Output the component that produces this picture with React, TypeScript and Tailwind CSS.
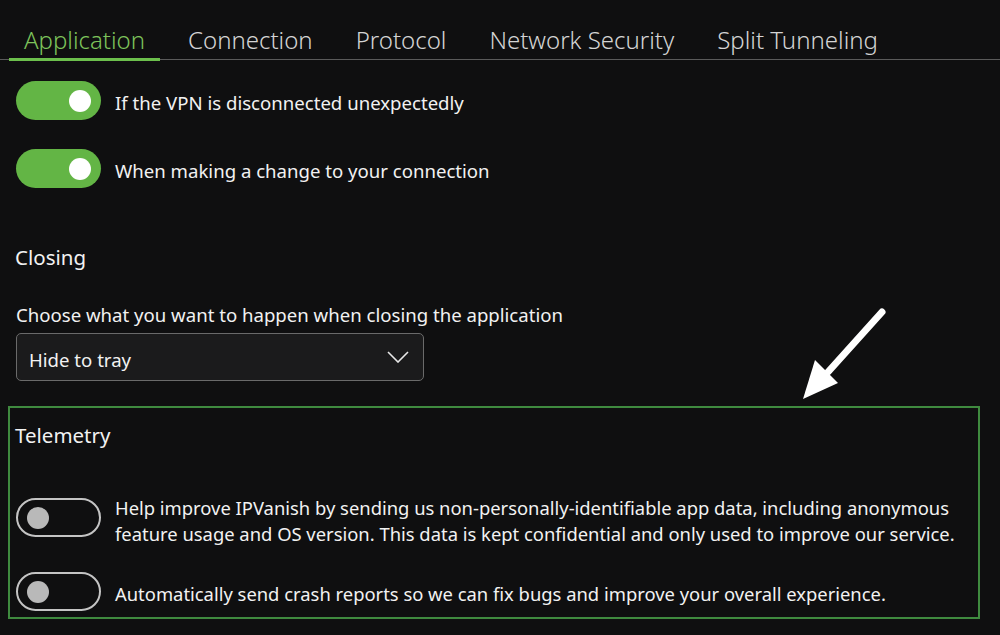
import React from "react";

function Toggle({ on }: { on: boolean }) {
  return on ? (
    <div className="w-[85px] h-[39px] rounded-full bg-[#63b545] flex items-center justify-end pr-[10px] shrink-0">
      <div className="w-[22px] h-[22px] rounded-full bg-white" />
    </div>
  ) : (
    <div className="w-[85px] h-[39px] rounded-full border-2 border-[#c4c4c4] flex items-center pl-[9px] shrink-0">
      <div className="w-[22px] h-[22px] rounded-full bg-[#b9b9b9]" />
    </div>
  );
}

export default function App() {
  const font = { fontFamily: '"Noto Sans", "Open Sans", sans-serif' };
  return (
    <div
      className="w-[1000px] h-[635px] bg-[#0f0f10] text-[#f2f2f2] overflow-hidden relative"
      style={font}
    >
      {/* Tabs */}
      <div className="flex items-end h-[60px] border-b border-[#5a5a5a] pl-[9px]">
        <div className="px-[15px] pb-[2px] border-b-[3px] border-[#6cbf4c] -mb-[2px] text-[24px] font-light text-[#7dc35b] leading-[32px]">
          Application
        </div>
        <div className="ml-[13px] px-[15px] pb-[3px] text-[24px] font-light text-[#d4d4d4] leading-[32px]">
          Connection
        </div>
        <div className="ml-[13px] px-[15px] pb-[3px] text-[24px] font-light text-[#d4d4d4] leading-[32px]">
          Protocol
        </div>
        <div className="ml-[13px] px-[15px] pb-[3px] text-[24px] font-light text-[#d4d4d4] leading-[32px]">
          Network Security
        </div>
        <div className="ml-[13px] px-[15px] pb-[3px] text-[24px] font-light text-[#d4d4d4] leading-[32px]">
          Split Tunneling
        </div>
      </div>

      <div className="pl-[16px]">
        <div className="flex items-center gap-[14px] mt-[21px]">
          <Toggle on />
          <span className="text-[18.6px] pt-[4px]">If the VPN is disconnected unexpectedly</span>
        </div>
        <div className="flex items-center gap-[14px] mt-[29px]">
          <Toggle on />
          <span className="text-[18.6px] pt-[4px]">When making a change to your connection</span>
        </div>

        <div className="mt-[54px] -ml-[1px] text-[20.5px] leading-[30px]">Closing</div>
        <div className="mt-[30px] text-[18.6px] leading-[26px]">
          Choose what you want to happen when closing the application
        </div>
        <div className="mt-[5px] w-[408px] h-[48px] rounded-[5px] border border-[#6a6a6a] bg-[#1b1b1c] flex items-center justify-between pl-[12px] pr-[14px]">
          <span className="text-[18.6px] pt-[6px]">Hide to tray</span>
          <svg width="22" height="12" viewBox="0 0 22 12" fill="none">
            <path d="M1 1 L11 11 L21 1" stroke="#e8e8e8" strokeWidth="1.6" />
          </svg>
        </div>
      </div>

      {/* Arrow annotation */}
      <svg
        className="absolute left-[795px] top-[305px]"
        width="95"
        height="100"
        viewBox="0 0 95 100"
        fill="none"
      >
        <path d="M87 7 L33 67" stroke="white" strokeWidth="7" strokeLinecap="round" />
        <path d="M8 94 L20 55 L43 78 Z" fill="white" />
      </svg>

      {/* Telemetry */}
      <div className="ml-[8px] mt-[25px] w-[972px] h-[213px] border-2 border-[#3f8a3f] pl-[6px] pt-[12px]">
        <div className="text-[20.5px] leading-[30px] -ml-[1px]">Telemetry</div>
        <div className="flex items-start gap-[14px] mt-[48px] h-[39px]">
          <Toggle on={false} />
          <div className="text-[18.4px] leading-[26px] -mt-[3px]">
            Help improve IPVanish by sending us non-personally-identifiable app data, including anonymous
            <br />
            feature usage and OS version. This data is kept confidential and only used to improve our service.
          </div>
        </div>
        <div className="flex items-center gap-[14px] mt-[35px]">
          <Toggle on={false} />
          <span className="text-[18.4px] pt-[4px]">
            Automatically send crash reports so we can fix bugs and improve your overall experience.
          </span>
        </div>
      </div>
    </div>
  );
}
